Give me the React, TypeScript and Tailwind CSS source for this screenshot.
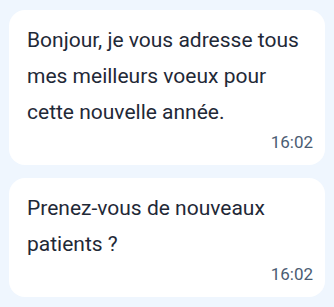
import React from 'react';

const messages = [
  { text: 'Bonjour, je vous adresse tous mes meilleurs voeux pour cette nouvelle année.', time: '16:02' },
  { text: 'Prenez-vous de nouveaux patients ?', time: '16:02' },
];

export default function App() {
  return (
    <div className="min-h-screen bg-[#eff6fe] px-[9px] pt-[10px] flex flex-col gap-[13px] font-['Roboto',sans-serif]">
      {messages.map((m, i) => (
        <div key={i} className="w-[316px] bg-white rounded-[16px] pl-[18px] pr-[12px] pt-[12px] pb-[11px]">
          <p className="text-[21px] leading-[36px] text-[#1f2937]">{m.text}</p>
          <div className="text-right text-[17px] leading-[24px] text-[#4b5c73]">{m.time}</div>
        </div>
      ))}
    </div>
  );
}
